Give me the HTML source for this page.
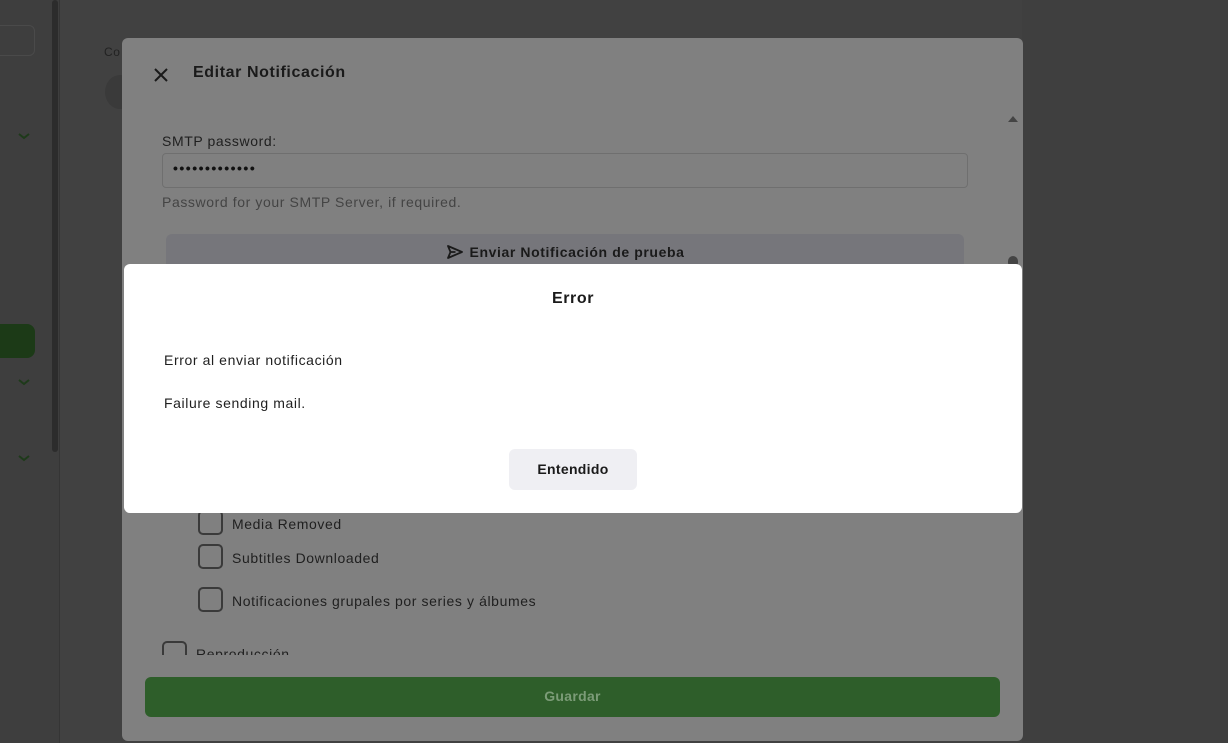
<!DOCTYPE html>
<html><head><meta charset="utf-8"><style>
*{box-sizing:border-box;margin:0;padding:0}
body{width:1228px;height:743px;overflow:hidden;background:#414141;font-family:"Liberation Sans",sans-serif;position:relative;letter-spacing:.6px}
.abs{position:absolute}
</style></head><body>
<div class="abs" style="left:0;top:0;width:60px;height:743px;background:#3e3e3e;border-right:1px solid #353535"></div>
<div class="abs" style="left:52px;top:0;width:6px;height:452px;background:#2c2c2c;border-radius:3px"></div>
<div class="abs" style="left:-10px;top:25px;width:45px;height:31px;border:1px solid #4a4a4a;border-radius:6px"></div>
<div class="abs" style="left:-10px;top:324px;width:45px;height:34px;background:#1c3a17;border-radius:8px"></div>
<svg class="abs" style="left:17px;top:131px" width="14" height="10"><path d="M2 3l5 4 5-4" fill="none" stroke="#1e3a1a" stroke-width="2"/></svg>
<svg class="abs" style="left:17px;top:377px" width="14" height="10"><path d="M2 3l5 4 5-4" fill="none" stroke="#1e3a1a" stroke-width="2"/></svg>
<svg class="abs" style="left:17px;top:453px" width="14" height="10"><path d="M2 3l5 4 5-4" fill="none" stroke="#1e3a1a" stroke-width="2"/></svg>
<div class="abs" style="left:104px;top:45px;font-size:12px;color:#222">Co</div>
<div class="abs" style="left:105px;top:75px;width:30px;height:34px;border-radius:50%;background:#3a3a3a"></div>
<div class="abs" style="left:1022px;top:0;width:206px;height:743px;background:#3f3f3f"></div>

<div class="abs" style="left:122px;top:38px;width:901px;height:703px;background:#808080;border-radius:6px;overflow:hidden">
  <svg class="abs" style="left:31px;top:29px" width="16" height="16"><path d="M2 2l12 12M14 2L2 14" stroke="#1a1a1a" stroke-width="2"/></svg>
  <div class="abs" style="left:71px;top:26px;font-size:16px;font-weight:bold;color:#1a1a1a">Editar Notificación</div>
  <div class="abs" style="left:886px;top:78px;width:0;height:0;border-left:5px solid transparent;border-right:5px solid transparent;border-bottom:6px solid #444"></div>
  <div class="abs" style="left:40px;top:95px;font-size:14px;color:#1f1f1f">SMTP password:</div>
  <div class="abs" style="left:40px;top:115px;width:806px;height:35px;border:1px solid #6f6f6f;border-radius:4px;padding:6px 10px;font-size:14px;color:#111;letter-spacing:1.5px;font-weight:bold">•••••••••••••</div>
  <div class="abs" style="left:40px;top:156px;font-size:14px;color:#444">Password for your SMTP Server, if required.</div>
  <div class="abs" style="left:44px;top:196px;width:798px;height:40px;background:#76767b;border-radius:6px;text-align:center;padding-top:10px;font-size:14px;font-weight:bold;color:#1a1a1a"><svg width="18" height="16" style="vertical-align:-3px;margin-right:6px"><path d="M2 2l14 6-14 6 2.5-6z M4.5 8h5" fill="none" stroke="#1a1a1a" stroke-width="1.8" stroke-linejoin="round"/></svg>Enviar Notificación de prueba</div>
  <div class="abs" style="left:886px;top:218px;width:10px;height:12px;background:#444;border-radius:5px"></div>
  <div class="abs" style="left:76px;top:472px;width:25px;height:25px;border:2px solid #3a3a3a;border-radius:5px"></div>
  <div class="abs" style="left:110px;top:478px;font-size:14px;color:#1f1f1f">Media Removed</div>
  <div class="abs" style="left:76px;top:506px;width:25px;height:25px;border:2px solid #3a3a3a;border-radius:5px"></div>
  <div class="abs" style="left:110px;top:512px;font-size:14px;color:#1f1f1f">Subtitles Downloaded</div>
  <div class="abs" style="left:76px;top:549px;width:25px;height:25px;border:2px solid #3a3a3a;border-radius:5px"></div>
  <div class="abs" style="left:110px;top:555px;font-size:14px;color:#1f1f1f">Notificaciones grupales por series y álbumes</div>
  <div class="abs" style="left:40px;top:602px;width:840px;height:15px;overflow:hidden">
    <div class="abs" style="left:0;top:1px;width:25px;height:25px;border:2px solid #3a3a3a;border-radius:5px"></div>
    <div class="abs" style="left:34px;top:6px;font-size:14px;color:#1f1f1f">Reproducción</div>
  </div>
  <div class="abs" style="left:23px;top:639px;width:855px;height:40px;background:#2e5e2a;border-radius:6px;text-align:center;padding-top:11px;font-size:14px;font-weight:bold;color:#7c9c78;letter-spacing:.3px">Guardar</div>
</div>

<div class="abs" style="left:124px;top:264px;width:898px;height:249px;background:#fff;border-radius:6px">
  <div class="abs" style="left:0;top:26px;width:100%;text-align:center;font-size:16px;font-weight:bold;color:#1a1a1a">Error</div>
  <div class="abs" style="left:40px;top:88px;font-size:14px;color:#1f1f1f">Error al enviar notificación</div>
  <div class="abs" style="left:40px;top:131px;font-size:14px;color:#1f1f1f">Failure sending mail.</div>
  <div class="abs" style="left:385px;top:185px;width:128px;height:41px;background:#efeff3;border-radius:6px;text-align:center;padding-top:12px;font-size:14px;font-weight:bold;color:#1a1a1a;letter-spacing:.3px">Entendido</div>
</div>
</body></html>
